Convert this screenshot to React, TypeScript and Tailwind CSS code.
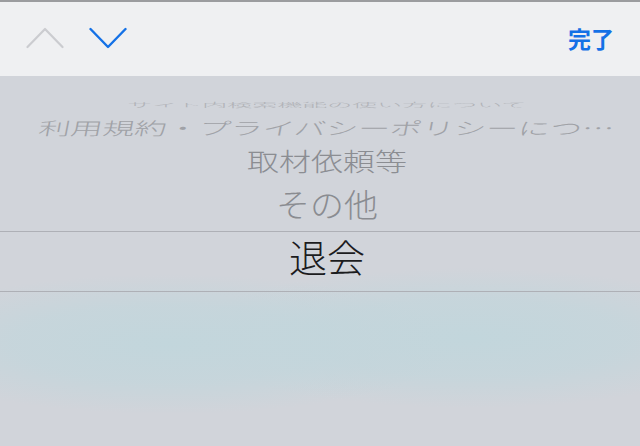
import React from "react";

const jp = "font-['Noto_Sans_CJK_JP','Noto_Sans_CJK_SC',sans-serif]";

export default function App() {
  return (
    <div className={`w-[640px] h-[446px] flex flex-col overflow-hidden ${jp}`}>
      <div className="h-[76px] shrink-0 bg-[#eff0f2] border-t-2 border-[#9b9c9f] flex items-center pl-[26px] pr-[26px]">
        <svg width="38" height="22" viewBox="0 0 38 22" className="mt-[-2px]">
          <path d="M1.5 20 L19 2 L36.5 20" fill="none" stroke="#cbccd0" strokeWidth="2.2" strokeLinecap="round" strokeLinejoin="round" />
        </svg>
        <svg width="38" height="22" viewBox="0 0 38 22" className="ml-[25px] mt-[-2px]">
          <path d="M1.5 2 L19 20 L36.5 2" fill="none" stroke="#1471e6" strokeWidth="2.4" strokeLinecap="round" strokeLinejoin="round" />
        </svg>
        <div className="flex-1" />
        <span className="text-[23px] leading-none font-bold text-[#1471e6] mt-[-1px]">完了</span>
      </div>
      <div className="flex-1 flex flex-col pl-[14px] bg-[#d1d4da] bg-[radial-gradient(ellipse_290px_70px_at_170px_268px,#c2d6dc_0%,rgba(194,214,220,0.7)_55%,transparent_100%),radial-gradient(ellipse_290px_70px_at_470px_262px,#c2d6dc_0%,rgba(194,214,220,0.7)_55%,transparent_100%)]">
        <div className="h-[16px] shrink-0" />
        <div className="h-[24px] shrink-0 flex items-center justify-center">
          <span className="text-[25px] leading-none font-light text-[#b0b2b7] scale-y-[0.22] whitespace-nowrap">サイト内検索機能の使い方について</span>
        </div>
        <div className="h-[24px] shrink-0 flex items-center justify-center">
          <span className="text-[32px] leading-none font-light text-[#a0a2a7] scale-y-[0.55] -skew-x-6 whitespace-nowrap mb-[2px]">利用規約・プライバシーポリシーにつ…</span>
        </div>
        <div className="h-[42px] shrink-0 flex items-center justify-center">
          <span className="text-[32px] leading-none font-light text-[#8b8d92] scale-y-[0.78] whitespace-nowrap mb-[3px]">取材依頼等</span>
        </div>
        <div className="h-[49px] shrink-0 flex items-center justify-center">
          <span className="text-[34px] leading-none font-light text-[#8a8c91] scale-y-[0.95] whitespace-nowrap mb-[6px]">その他</span>
        </div>
        <div className="h-px shrink-0 bg-[#aeb0b6] -ml-[14px]" />
        <div className="h-[59px] shrink-0 flex items-center justify-center">
          <span className="text-[38px] leading-none font-light text-[#1c1c1e] whitespace-nowrap mb-[11px]">退会</span>
        </div>
        <div className="h-px shrink-0 bg-[#aeb0b6] -ml-[14px]" />
        <div className="flex-1" />
      </div>
    </div>
  );
}
